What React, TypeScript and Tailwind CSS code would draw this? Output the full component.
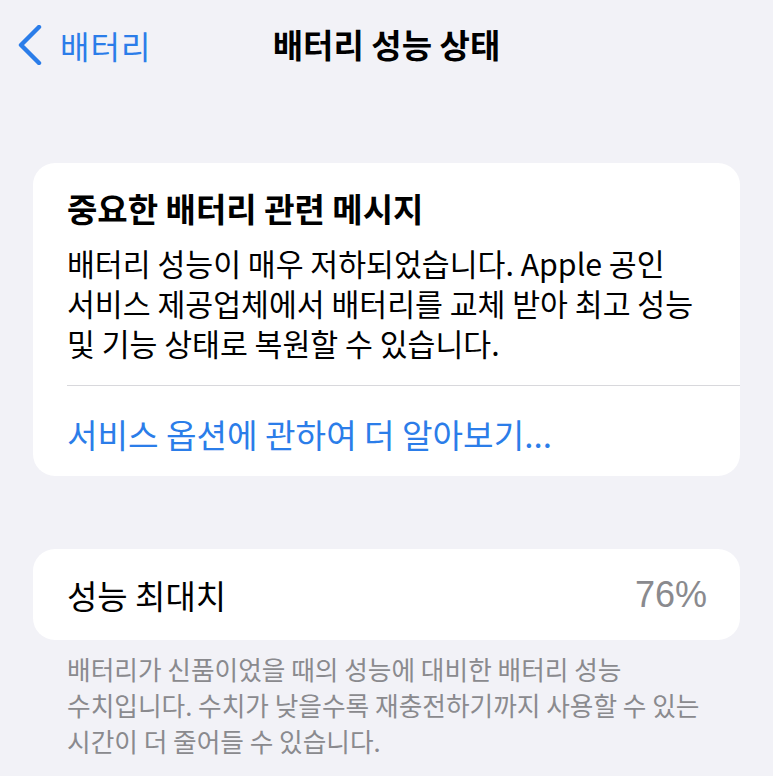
const font = { fontFamily: '"Noto Sans CJK KR", "Noto Sans", sans-serif' };

function BackChevron() {
  return (
    <svg width="28" height="40" viewBox="0 0 28 40" className="shrink-0">
      <path
        d="M23 2 L5 20 L23 38"
        fill="none"
        stroke="#2b7de9"
        strokeWidth="4.4"
        strokeLinecap="round"
        strokeLinejoin="round"
      />
    </svg>
  );
}

export default function App() {
  return (
    <div
      className="w-[773px] h-[776px] overflow-hidden bg-[#f2f2f7] text-black"
      style={font}
    >
      {/* nav bar */}
      <div className="relative h-[90px] flex items-center justify-center">
        <div className="absolute left-[16px] top-[25px] flex items-center gap-[16px]">
          <BackChevron />
          <span className="text-[32px] leading-[40px] tracking-[1px] text-[#2b7de9]">배터리</span>
        </div>
        <h1 className="text-[33px] leading-[40px] font-semibold mb-[2px]">배터리 성능 상태</h1>
      </div>

      {/* important message */}
      <div className="mx-[33px] mt-[73px] rounded-[22px] bg-white pl-[34px] pt-[25px] pb-[22px]">
        <h2 className="text-[33px] leading-[40px] font-semibold">중요한 배터리 관련 메시지</h2>
        <p className="mt-[15px] -mr-[20px] text-[30.3px] leading-[40px]">
          배터리 성능이 매우 저하되었습니다. Apple 공인
          <br />
          서비스 제공업체에서 배터리를 교체 받아 최고 성능
          <br />
          및 기능 상태로 복원할 수 있습니다.
        </p>
        <div className="mt-[22px] h-px bg-[#d8d8dc]" />
        <div className="mt-[28px] text-[33.2px] leading-[40px] text-[#2b7de9]">
          서비스 옵션에 관하여 더 알아보기...
        </div>
      </div>

      {/* peak capacity */}
      <div className="mx-[33px] mt-[73px] h-[91px] rounded-[22px] bg-white pl-[34px] pr-[33px] flex items-center justify-between">
        <span className="text-[33px] leading-[40px]">성능 최대치</span>
        <span
          className="text-[36px] leading-[40px] text-[#8a8a8e]"
          style={{ fontFamily: '"Liberation Sans", Arial, sans-serif' }}
        >
          76%
        </span>
      </div>

      <p className="ml-[67px] -mr-[20px] mt-[11px] text-[25.7px] leading-[36px] text-[#8a8a8e]">
        배터리가 신품이었을 때의 성능에 대비한 배터리 성능
        <br />
        수치입니다. 수치가 낮을수록 재충전하기까지 사용할 수 있는
        <br />
        시간이 더 줄어들 수 있습니다.
      </p>
    </div>
  );
}
